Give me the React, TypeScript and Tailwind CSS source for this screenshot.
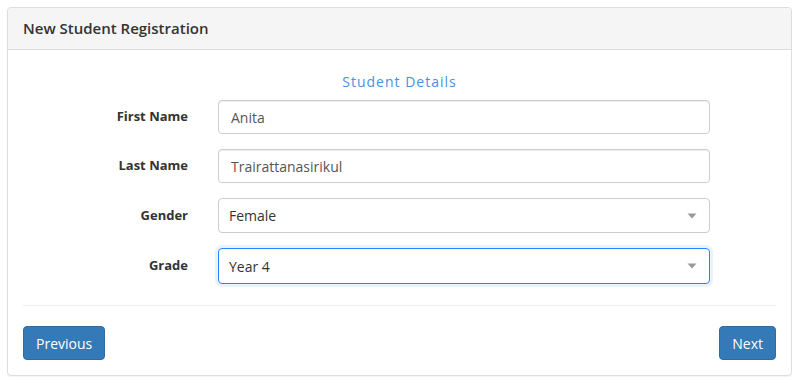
import React from "react";

const Caret = () => (
  <svg width="10" height="6" viewBox="0 0 10 6" className="absolute right-[12px] top-1/2 -translate-y-1/2">
    <path d="M0.5 0.5 L9.5 0.5 L5 5.5 Z" fill="#999" />
  </svg>
);

function Row({ label, children, className }: { label: string; children: React.ReactNode; className?: string }) {
  return (
    <div className={"flex items-center " + (className ?? "")}>
      <label className="w-[165px] shrink-0 text-right text-[13px] font-bold text-[#333]">{label}</label>
      <div className="ml-[30px] w-[492px]">{children}</div>
    </div>
  );
}

export default function App() {
  return (
    <div className="min-h-[381px] bg-white pt-[7px] pl-[7px]" style={{ fontFamily: '"Open Sans", sans-serif' }}>
      <div className="w-[785px] h-[369px] rounded-[4px] border border-[#ddd] bg-white shadow-[0_1px_1px_rgba(0,0,0,0.05)] overflow-hidden flex flex-col">
        <div className="h-[42px] shrink-0 bg-[#f5f5f5] border-b border-[#ddd] px-[15px] flex items-center">
          <h3 className="text-[15px] font-semibold text-[#333]">New Student Registration</h3>
        </div>
        <div className="px-[15px] flex flex-col">
          <div className="pt-[22px] h-[50px] text-center text-[14px] text-[#4a90e2] tracking-[1px] leading-[20px]">Student Details</div>
          <Row label="First Name">
            <div className="h-[34px] rounded-[4px] border border-[#ccc] px-[12px] flex items-center text-[14px] text-[#555] shadow-[inset_0_1px_1px_rgba(0,0,0,0.075)]">Anita</div>
          </Row>
          <Row label="Last Name" className="mt-[15px]">
            <div className="h-[34px] rounded-[4px] border border-[#ccc] px-[12px] flex items-center text-[14px] text-[#555] shadow-[inset_0_1px_1px_rgba(0,0,0,0.075)]">Trairattanasirikul</div>
          </Row>
          <Row label="Gender" className="mt-[15px]">
            <div className="relative h-[35px] rounded-[4px] border border-[#ccc] px-[10px] flex items-center text-[14px] text-[#333]">
              Female
              <Caret />
            </div>
          </Row>
          <Row label="Grade" className="mt-[15px]">
            <div className="relative h-[36px] rounded-[4px] border border-[#2684ff] px-[10px] flex items-center text-[14px] text-[#333] shadow-[0_0_0_3px_rgba(38,132,255,0.1)]">
              Year 4
              <Caret />
            </div>
          </Row>
          <div className="mt-[21px] border-t border-[#eee]" />
          <div className="mt-[20px] flex justify-between">
            <button className="h-[34px] px-[12px] rounded-[4px] border border-[#2e6da4] bg-[#337ab7] text-white text-[14px]">Previous</button>
            <button className="h-[34px] px-[12px] rounded-[4px] border border-[#2e6da4] bg-[#337ab7] text-white text-[14px]">Next</button>
          </div>
        </div>
      </div>
    </div>
  );
}
